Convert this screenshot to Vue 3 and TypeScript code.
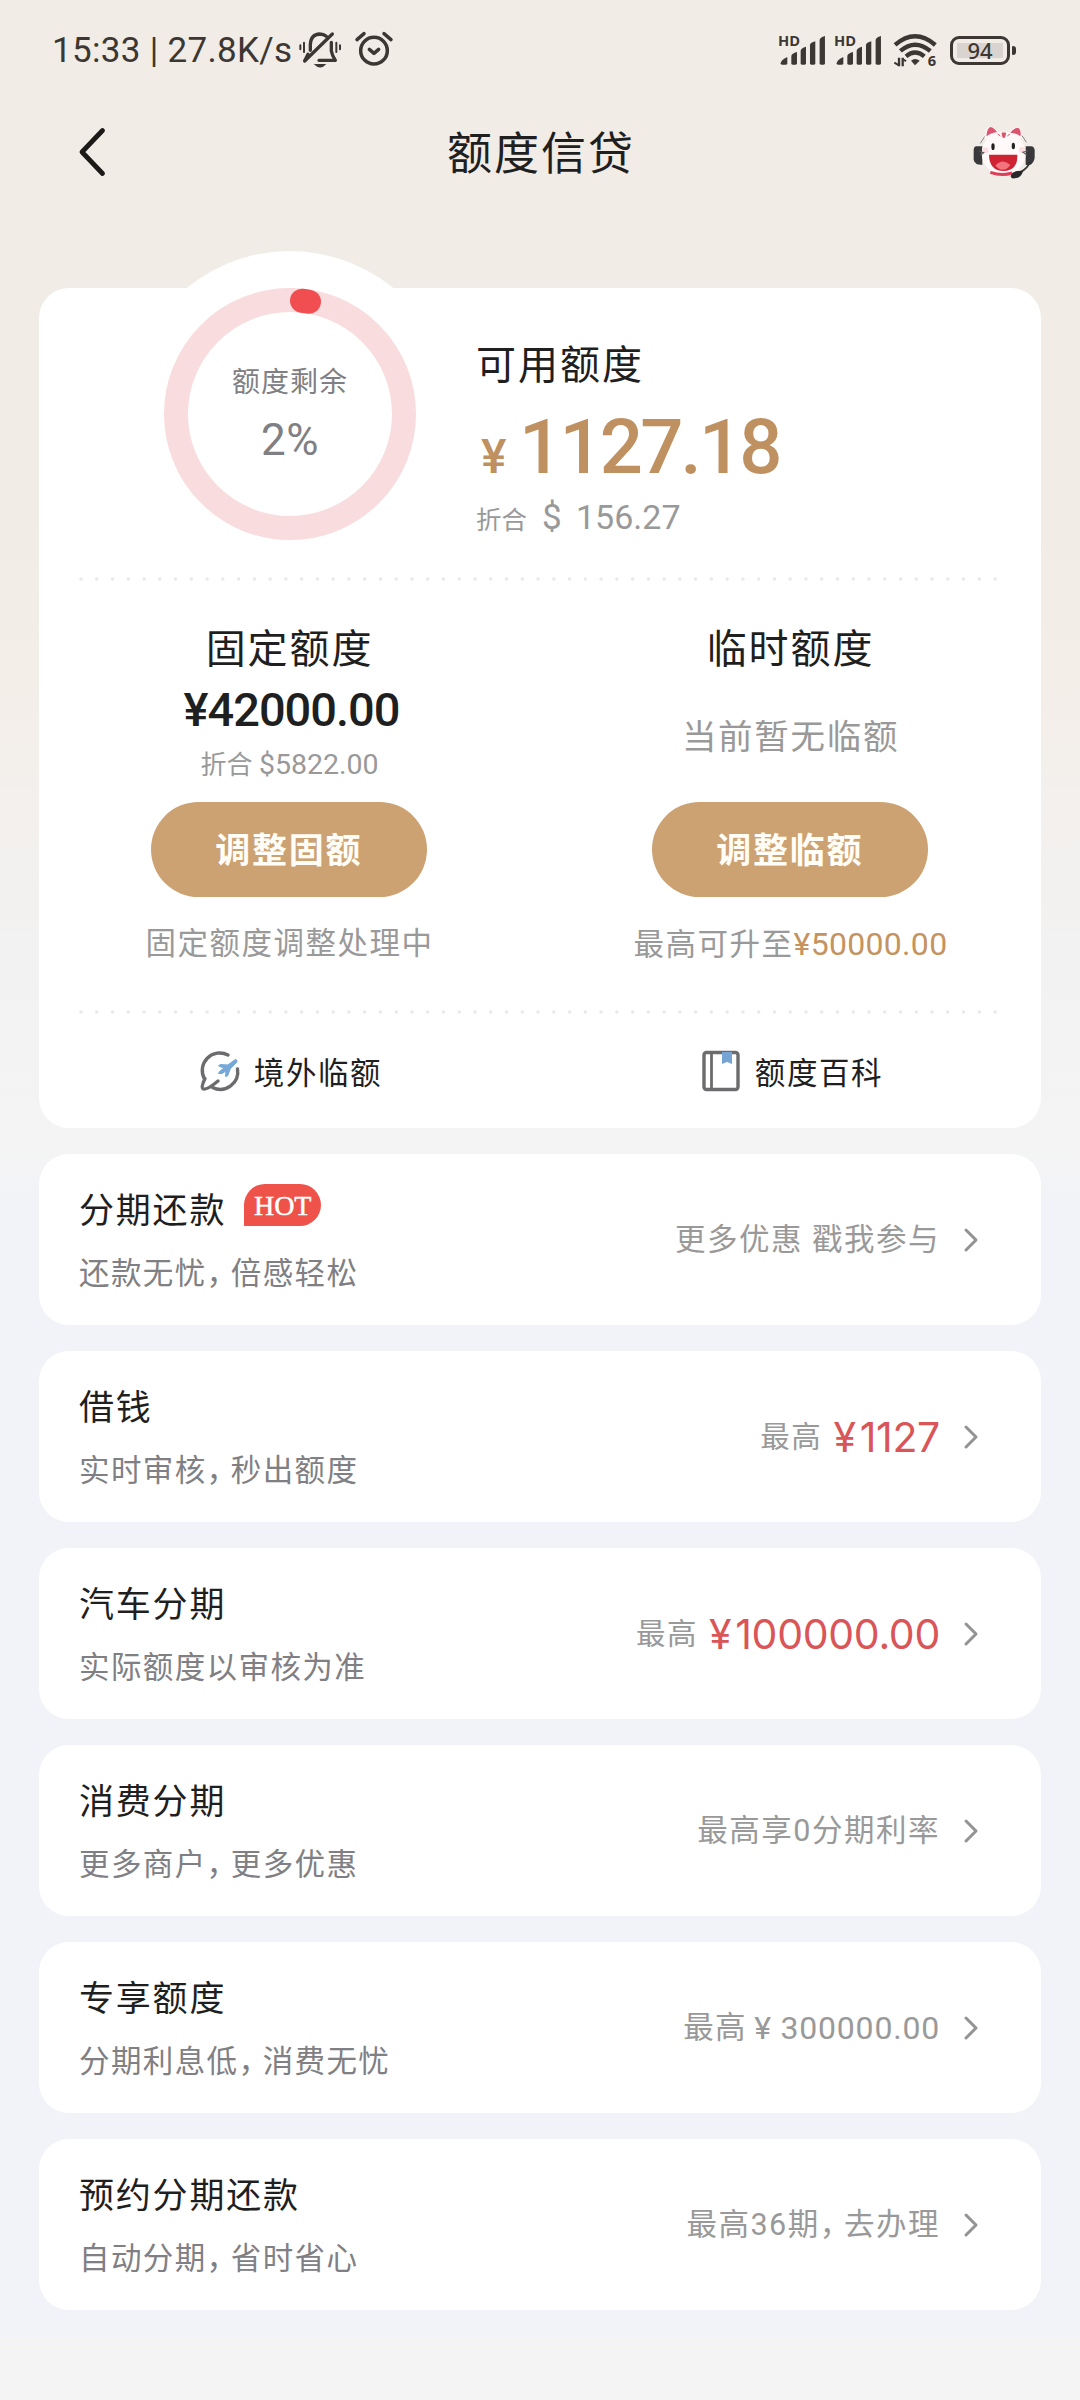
<script setup lang="ts">
interface Offer {
  title: string
  desc: string
  hot?: boolean
  label: string
  amount?: string
  trailing?: string
}

const offers: Offer[] = [
  { title: '分期还款', desc: '还款无忧，倍感轻松', hot: true, label: '更多优惠 戳我参与' },
  { title: '借钱', desc: '实时审核，秒出额度', label: '最高', amount: '1127' },
  { title: '汽车分期', desc: '实际额度以审核为准', label: '最高', amount: '100000.00' },
  { title: '消费分期', desc: '更多商户，更多优惠', label: '最高享0分期利率' },
  { title: '专享额度', desc: '分期利息低，消费无忧', label: '最高', trailing: '¥ 300000.00' },
  { title: '预约分期还款', desc: '自动分期，省时省心', label: '最高36期，去办理' },
]

// Splits around the full-width comma so that it can be set tighter
const pieces = (text: string): string[] => text.split(/(，)/)
</script>

<template>
  <div class="page">
    <header class="status">
      <span class="clock">15:33 | 27.8K/s</span>
      <svg class="bell" width="45" height="38" viewBox="805 64 135 114" fill="none" stroke="currentColor" stroke-width="10" stroke-linecap="round" stroke-linejoin="round">
        <path d="M842 122V104Q844 74 870 73 882 73 890 80M905 98V124Q907 136 917 152H868" />
        <path d="M908 73 825 154" />
        <path d="M835 134 826 152" />
        <path d="M812 107v12M823 99v28M920 99v28M931 107v12" stroke-width="6" />
        <path d="M852 163H890Q872 184 852 163z" fill="currentColor" stroke="none" />
      </svg>
      <svg class="alarm" width="40" height="37.300" viewBox="972 60 120 112" fill="none" stroke="currentColor" stroke-width="10.500" stroke-linecap="round" stroke-linejoin="round">
        <circle cx="1032" cy="122" r="40" />
        <path d="M981 89 1002 71M1083 89 1062 71M1018 118l14 12 14-12" />
      </svg>
      <span class="spacer" />
      <svg v-for="n in 2" :key="n" class="signal" width="48.300" height="32" viewBox="55 70 145 96" fill="currentColor">
        <text x="55" y="107" class="hd">HD</text>
        <path d="M63 158Q64 148 83 139V158Q83 162 79 162H67Q63 162 63 158z" />
        <path d="M95 136Q96 129 112 124V158Q112 162 108 162H99Q95 162 95 158z" />
        <path d="M123 120Q124 112 139 108V158Q139 162 135 162H127Q123 162 123 158z" />
        <path d="M151 103Q152 96 167 92V158Q167 162 163 162H155Q151 162 151 158z" />
        <path d="M180 88Q181 80 196 76V158Q196 162 192 162H184Q180 162 180 158z" />
      </svg>
      <svg class="wifi" width="44.700" height="35.300" viewBox="398 68 134 106" fill="none" stroke="currentColor" stroke-width="13">
        <path d="M404 104Q464 52 525 104M420 122Q464 84 510 122M437 138Q464 115 492 138" />
        <path d="M452 151Q464 141 478 151L464 165z" fill="currentColor" stroke="none" />
        <path d="M416 142v26M427 142v26" stroke-width="7" />
        <path d="M402 157l14 8M427 146l10 7" stroke-width="6" />
        <text x="502" y="168" class="gen">6</text>
      </svg>
      <span class="battery"><span class="level">94</span></span>
    </header>

    <nav class="nav">
      <svg class="back" width="28" height="50" viewBox="0 0 28 50" fill="none" stroke="#1c1a18" stroke-width="4.800" stroke-linecap="round" stroke-linejoin="round">
        <path d="M24.500 3.500 4 25 24.500 46.500" />
      </svg>
      <h1>额度信贷</h1>
      <svg class="mascot" width="62" height="54" viewBox="98 70 186 162">
        <path d="M120 125Q132 100 150 92M258 122Q250 104 235 94" fill="none" stroke="#8b8789" stroke-width="3" />
        <path d="M120 134H106Q100 136 100 144V174Q101 182 110 188L126 190V134z" fill="#39393b" />
        <path d="M256 134H274Q282 136 283 146V168Q281 184 268 190L256 190z" fill="#39393b" />
        <path d="M133 112Q134 76 150 74 162 76 174 92H206Q222 74 236 75 244 84 244 112z" fill="#fff6f5" />
        <path d="M138 104Q140 78 151 76 164 80 170 92 156 92 138 104zM210 94Q218 80 234 78 244 86 240 104 226 92 210 94z" fill="#dc5570" />
        <ellipse cx="190" cy="155" rx="66" ry="64" fill="#fffaf9" />
        <path d="M185 94H196L193 107H188zM172 97l8 6M209 97l-8 6" fill="#d9546b" stroke="#d9546b" stroke-width="3" />
        <ellipse cx="158" cy="135" rx="5" ry="10" fill="#222" />
        <ellipse cx="219" cy="133" rx="5" ry="10" fill="#222" />
        <circle cx="136" cy="146" r="9" fill="#fcdde0" />
        <circle cx="245" cy="144" r="9" fill="#fcdde0" />
        <path d="M146 159H231Q233 206 190 208 147 207 146 159z" fill="#cf2233" />
        <path d="M165 192Q187 168 210 190 190 218 165 192z" fill="#f2727e" />
        <path d="M150 212Q184 224 216 214" fill="none" stroke="#dc4058" stroke-width="9" />
        <path d="M270 180Q262 200 240 212" fill="none" stroke="#333" stroke-width="5" />
        <path d="M213 224Q218 208 246 209 240 230 216 228z" fill="#29292b" stroke="#29292b" stroke-width="4" stroke-linejoin="round" />
        <path d="M116 148l14 5-10 8M262 148l-14 4 12 8" fill="none" stroke="#555" stroke-width="3.500" />
      </svg>
    </nav>

    <main class="content">
      <section class="card">
        <div class="summary">
          <div class="ring">
            <svg width="326" height="326" viewBox="0 0 326 326" fill="none">
              <circle cx="163" cy="163" r="163" fill="#fff" />
              <circle cx="163" cy="163" r="114" stroke="#f9dcdd" stroke-width="24" />
              <path d="M175 49.700A114 114 0 0 1 182 50.700" stroke="#f04e50" stroke-width="24" stroke-linecap="round" />
            </svg>
            <div class="ring-text">
              <span class="ring-label">额度剩余</span>
              <span class="ring-value">2%</span>
            </div>
          </div>
          <div class="available">
            <h2>可用额度</h2>
            <div class="cny"><span class="sign">¥</span><span class="value">1127.18</span></div>
            <div class="usd"><span class="approx">折合</span><span class="dollar">$</span><span class="figure">156.27</span></div>
          </div>
        </div>

        <svg class="dots" width="920" height="4"><line x1="2" y1="2" x2="918" y2="2" /></svg>

        <div class="limits">
          <div class="limit">
            <h3>固定额度</h3>
            <div class="limit-value">¥42000.00</div>
            <div class="limit-usd">折合 <span>$5822.00</span></div>
            <button type="button">调整固额</button>
            <p>固定额度调整处理中</p>
          </div>
          <div class="limit">
            <h3>临时额度</h3>
            <div class="limit-none">当前暂无临额</div>
            <button type="button">调整临额</button>
            <p>最高可升至<span class="gold">¥50000.00</span></p>
          </div>
        </div>

        <svg class="dots" width="920" height="4"><line x1="2" y1="2" x2="918" y2="2" /></svg>

        <div class="links">
          <a class="link">
            <svg width="40" height="42" viewBox="0 0 40 42" fill="none" stroke="#6c6c6e" stroke-width="3.400" stroke-linecap="round" stroke-linejoin="round">
              <path d="M28 5A17.500 17.500 0 0 0 4.500 29M37.500 19A17.500 17.500 0 0 1 12.500 37.500" />
              <path d="M5 28.500Q1 37 2.800 38.600 6 41 18 31" />
              <path d="M35.500 9.500Q37.500 9.500 37 12L30.500 18.500 27.500 26 25.500 26.500 26 21 22 23.500H18.500L19.500 21.500 24 18 18.500 16 20 14.500 27.500 15z" fill="#76a9d8" stroke="#76a9d8" stroke-width="1" />
            </svg>
            <span>境外临额</span>
          </a>
          <a class="link">
            <svg width="40" height="42" viewBox="0 0 40 42" fill="none" stroke="#6c6c6e" stroke-width="3.400">
              <rect x="3" y="2.500" width="34" height="37" rx="2.500" />
              <path d="M10.500 2.500v37" stroke-width="2.800" />
              <path d="M21 2h10v12l-5-2-5 2z" fill="#76a5d3" stroke="none" />
            </svg>
            <span>额度百科</span>
          </a>
        </div>
      </section>

      <section v-for="offer in offers" :key="offer.title" class="offer">
        <div class="offer-main">
          <div class="offer-title">
            <span>{{ offer.title }}</span>
            <span v-if="offer.hot" class="hot">HOT</span>
          </div>
          <div class="offer-desc">
            <span v-for="(piece, i) in pieces(offer.desc)" :key="i" :class="{ comma: piece === '，' }">{{ piece }}</span>
          </div>
        </div>
        <div class="offer-side">
          <span class="offer-label" :class="{ small: offer.amount }"><span v-for="(piece, i) in pieces(offer.label)" :key="i" :class="{ comma: piece === '，' }">{{ piece }}</span></span>
          <span v-if="offer.amount" class="offer-amount"><span class="yuan">¥</span>{{ offer.amount }}</span>
          <span v-if="offer.trailing" class="offer-trailing">{{ offer.trailing }}</span>
        </div>
        <svg class="chevron" width="16" height="26" viewBox="0 0 16 26" fill="none" stroke="#939393" stroke-width="3" stroke-linecap="round" stroke-linejoin="round">
          <path d="M3 3l10 10L3 23" />
        </svg>
      </section>
    </main>
  </div>
</template>

<style>
body {
  background: #f4f4f4;
}
</style>

<style scoped>
.page {
  width: 1080px;
  height: 2400px;
  box-sizing: border-box;
  overflow: hidden;
  font-family: Roboto, "Noto Sans CJK SC", sans-serif;
  color: #1f1f1f;
  background:
    linear-gradient(#f1ece6 0, #f1ece6 520px, #f4eee9 680px, #f2f2f2 960px, #f4f4f4 1150px, #f2f3f8 1200px, #f2f3f8 2337px, #f4f4f4 2337px);
}
svg {
  overflow: visible;
  flex: none;
}
h1, h2, h3, p {
  margin: 0;
  font-weight: 400;
}
.status {
  display: flex;
  align-items: center;
  height: 100px;
  padding: 0 70px 0 52px;
  color: #3d3733;
}
.clock {
  width: 246px;
  padding-top: 1px;
  font-size: 35px;
  line-height: 40px;
  letter-spacing: 0.300px;
  white-space: nowrap;
}
.alarm {
  margin: -2px 0 0 11px;
}
.spacer {
  flex: 1;
}
.signal {
  margin-right: 7.700px;
}
.hd {
  font: 700 44px "Open Sans", sans-serif;
}
.gen {
  font: 700 44px "Open Sans", sans-serif;
  fill: currentColor;
  stroke: none;
}
.wifi {
  margin: 2px 12.500px 0 2.500px;
}
.battery {
  position: relative;
  box-sizing: border-box;
  width: 60px;
  height: 29px;
  padding: 4px;
  border: 3px solid currentColor;
  border-radius: 9px;
}
.battery::after {
  content: "";
  position: absolute;
  top: 7px;
  right: -9px;
  width: 4px;
  height: 9px;
  border-radius: 1px 3px 3px 1px;
  background: currentColor;
}
.level {
  display: block;
  width: 46px;
  height: 15px;
  background: #d9d4cf;
  font: 500 22px/14px "Noto Sans", sans-serif;
  text-align: center;
}
.nav {
  display: flex;
  align-items: center;
  justify-content: space-between;
  height: 104px;
  padding: 0 45px 0 78px;
}
h1 {
  margin-left: 3px;
  padding-top: 5px;
  font-size: 45px;
  line-height: 60px;
  letter-spacing: 2px;
}
.content {
  display: flex;
  flex-direction: column;
  gap: 26px;
  padding: 84px 39px 0;
}
.card {
  box-sizing: border-box;
  height: 840px;
  border-radius: 30px;
  background: #fff;
}
.summary {
  display: flex;
  height: 289px;
}
.ring {
  position: relative;
  width: 326px;
  height: 326px;
  margin: -37px 0 0 88px;
}
.ring svg {
  display: block;
}
.ring-text {
  position: absolute;
  inset: 0;
  display: flex;
  flex-direction: column;
  align-items: center;
  padding-top: 112px;
  color: #808084;
}
.ring-label {
  font-size: 28px;
  line-height: 40px;
  letter-spacing: 1px;
}
.ring-value {
  margin-top: 13px;
  font-size: 44px;
  line-height: 48px;
  letter-spacing: 0.500px;
}
.available {
  margin-left: 23px;
  padding-top: 51px;
}
h2 {
  font-size: 40px;
  line-height: 54px;
  letter-spacing: 2px;
}
.cny {
  display: flex;
  align-items: baseline;
  height: 88px;
  padding-top: 3px;
  box-sizing: border-box;
  color: #bf9060;
  font-weight: 500;
}
.sign {
  width: 43px;
  padding-left: 5px;
  box-sizing: border-box;
  font-size: 48px;
}
.value {
  font-size: 76px;
  line-height: 102px;
  letter-spacing: -2.800px;
}
.usd {
  display: flex;
  align-items: baseline;
  margin-top: 1px;
  color: #999;
  font-size: 34px;
  line-height: 70px;
}
.approx {
  width: 66px;
  font-size: 25.500px;
}
.dollar {
  width: 34px;
  font-size: 35px;
}
.dots {
  display: block;
  margin-left: 40px;
}
.dots line {
  stroke: #e9e9e9;
  stroke-width: 3.500px;
  stroke-linecap: round;
  stroke-dasharray: 0 15.760;
}
.limits {
  display: flex;
  height: 429px;
}
.limit {
  flex: 1;
  display: flex;
  flex-direction: column;
  align-items: center;
  padding-top: 41px;
}
h3 {
  font-size: 40px;
  line-height: 56px;
  letter-spacing: 1.900px;
}
.limit-value {
  margin: 4px 0 0 4px;
  font-size: 47px;
  font-weight: 500;
  line-height: 56px;
  letter-spacing: -1px;
}
.limit-usd {
  height: 64px;
  font-size: 26px;
  line-height: 54px;
  color: #999;
}
.limit-usd span {
  font-size: 28.500px;
}
.limit-none {
  height: 124px;
  font-size: 34.500px;
  line-height: 118px;
  letter-spacing: 1.700px;
  color: #999;
}
button {
  width: 276px;
  height: 95px;
  margin-right: 1.500px;
  padding: 0;
  border: 0;
  border-radius: 48px;
  background: #cca272;
  color: #fffdf6;
  font: 700 35px/99px Roboto, "Noto Sans CJK SC", sans-serif;
  letter-spacing: 1.700px;
}
.limit p {
  margin-top: 23px;
  font-size: 30.500px;
  line-height: 48px;
  letter-spacing: 1.500px;
  color: #999;
  white-space: nowrap;
}
.gold {
  font-size: 32px;
  letter-spacing: 0.300px;
  color: #c4935f;
}
.links {
  display: flex;
  height: 113px;
}
.link {
  flex: 1;
  display: flex;
  align-items: center;
  justify-content: center;
  gap: 14px;
  padding-left: 3px;
  font-size: 30.500px;
  letter-spacing: 1.600px;
}
.offer {
  display: flex;
  box-sizing: border-box;
  height: 171px;
  padding: 0 62px 0 40px;
  border-radius: 30px;
  background: #fff;
}
.offer-main {
  flex: 1;
  padding-top: 32.500px;
}
.offer-title {
  display: flex;
  height: 50px;
  font-size: 35px;
  line-height: 50px;
  letter-spacing: 1.800px;
}
.hot {
  width: 77px;
  height: 42px;
  margin: -2.500px 0 0 18px;
  border-radius: 21px 21px 21px 0;
  background: #ee5249;
  color: #fff;
  font: 400 28px/43px "Liberation Serif", serif;
  letter-spacing: 0;
  text-align: center;
  -webkit-text-stroke: 0.500px #fff;
}
.offer-desc {
  display: flex;
  margin-top: 15px;
  font-size: 30.500px;
  line-height: 44px;
  letter-spacing: 1.400px;
  color: #808084;
}
.comma {
  margin-right: 7.500px;
  font-feature-settings: "halt";
}
.offer-side {
  display: flex;
  align-items: center;
  line-height: 174px;
  white-space: nowrap;
  color: #999;
}
.offer-label {
  font-size: 30.500px;
  letter-spacing: 1.500px;
}
.offer-label.small {
  font-size: 29.500px;
}
.offer-amount {
  margin-left: 11px;
  color: #da5558;
  font-family: Inter, sans-serif;
  font-size: 41px;
  letter-spacing: -0.300px;
}
.yuan {
  margin-right: 4px;
}
.offer-trailing {
  margin-left: 7px;
  font-size: 32px;
  letter-spacing: 0.800px;
}
.chevron {
  align-self: center;
  margin-left: 23px;
}
</style>
